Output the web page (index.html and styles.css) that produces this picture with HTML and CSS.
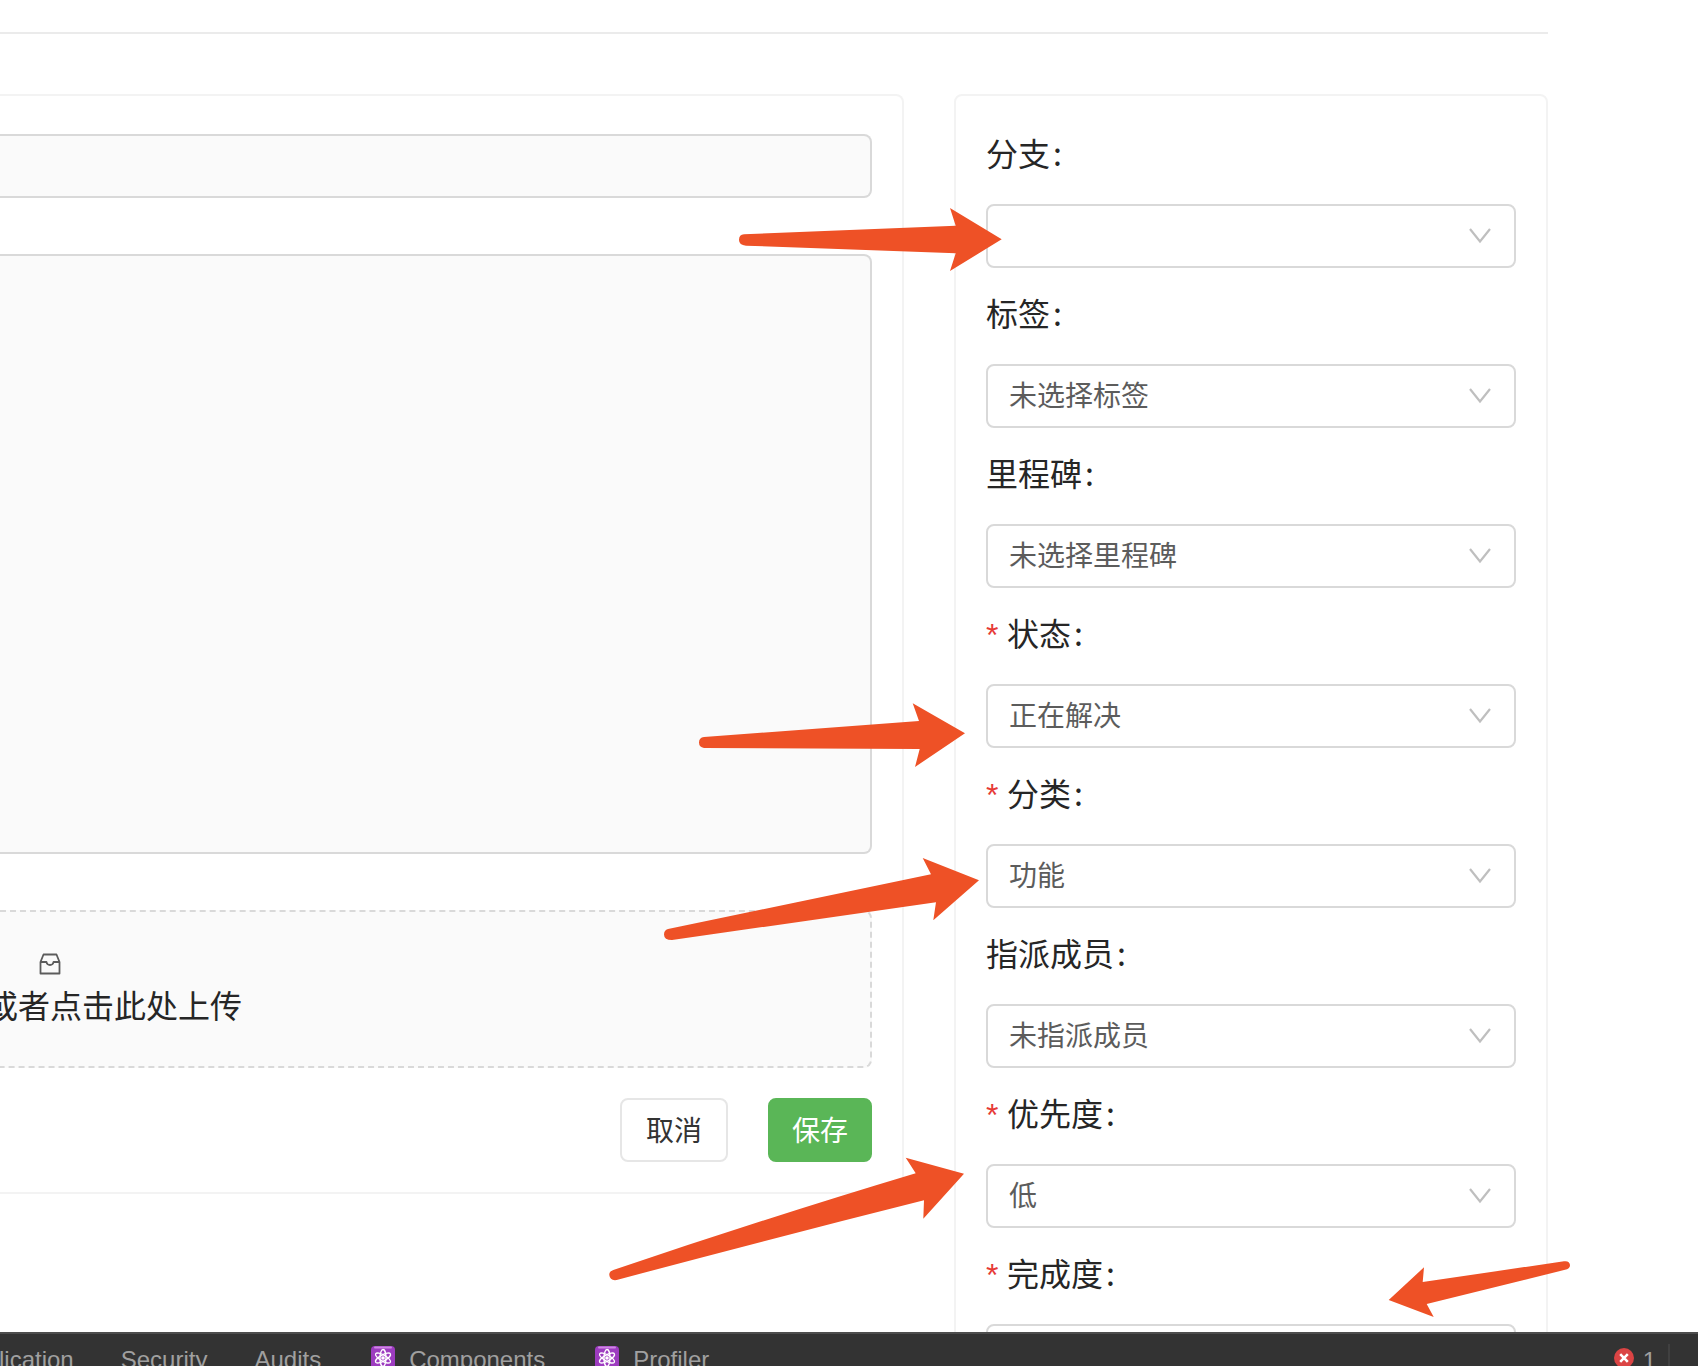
FILE: index.html
```html
<!DOCTYPE html>
<html lang="zh-CN">
<head>
<meta charset="utf-8">
<link rel="stylesheet" href="styles.css">
</head>
<body>
<svg class="defs" width="0" height="0" aria-hidden="true">
  <symbol id="chevron" viewBox="0 0 22 16"><path d="M1 1 L11 13.500 L21 1" fill="none" stroke="#bfbfbf" stroke-width="2.200"/></symbol>
  <symbol id="atom" viewBox="0 0 24 24">
    <rect width="24" height="24" rx="4" fill="#9d3cc0"/>
    <path d="M4 1.500H20" stroke="#cf86e4" stroke-width="2" stroke-linecap="round"/>
    <g fill="none" stroke="#fff" stroke-width="1.300">
      <ellipse cx="12" cy="12" rx="3" ry="8.500"/>
      <ellipse cx="12" cy="12" rx="3" ry="8.500" transform="rotate(60 12 12)"/>
      <ellipse cx="12" cy="12" rx="3" ry="8.500" transform="rotate(120 12 12)"/>
    </g>
    <circle cx="12" cy="12" r="1.800" fill="#fff"/>
  </symbol>
</svg>
<main class="page">
  <hr class="divider">
  <form class="columns">
    <section class="card editor">
      <input class="field title" type="text" aria-label="标题">
      <textarea class="field body-text" aria-label="描述"></textarea>
      <div class="dropzone">
        <div class="drop-icon">
          <svg width="22" height="22" viewBox="0 0 22 22" fill="none" stroke="#5c5c5c" stroke-width="1.800"><path d="M1.500 9 L4.500 1.500 H17.500 L20.500 9 V20.500 H1.500 Z M1.500 9 H7.500 C8 13 14 13 14.500 9 H20.500" stroke-linejoin="round"/></svg>
        </div>
        <p class="drop-text">或者点击此处上传</p>
      </div>
      <div class="actions">
        <button class="btn" type="button">取消</button>
        <button class="btn primary" type="button">保存</button>
      </div>
    </section>
    <aside class="card side">
      <div class="item"><label for="branch">分支<span class="colon">:</span></label><div class="select"><select id="branch"><option></option></select><svg><use href="#chevron"/></svg></div></div>
      <div class="item"><label for="tag">标签<span class="colon">:</span></label><div class="select"><select id="tag"><option>未选择标签</option></select><svg><use href="#chevron"/></svg></div></div>
      <div class="item"><label for="milestone">里程碑<span class="colon">:</span></label><div class="select"><select id="milestone"><option>未选择里程碑</option></select><svg><use href="#chevron"/></svg></div></div>
      <div class="item"><label for="status"><span class="star">*</span>状态<span class="colon">:</span></label><div class="select"><select id="status"><option>正在解决</option></select><svg><use href="#chevron"/></svg></div></div>
      <div class="item"><label for="category"><span class="star">*</span>分类<span class="colon">:</span></label><div class="select"><select id="category"><option>功能</option></select><svg><use href="#chevron"/></svg></div></div>
      <div class="item"><label for="member">指派成员<span class="colon">:</span></label><div class="select"><select id="member"><option>未指派成员</option></select><svg><use href="#chevron"/></svg></div></div>
      <div class="item"><label for="priority"><span class="star">*</span>优先度<span class="colon">:</span></label><div class="select"><select id="priority"><option>低</option></select><svg><use href="#chevron"/></svg></div></div>
      <div class="item"><label for="progress"><span class="star">*</span>完成度<span class="colon">:</span></label><div class="select"><select id="progress"><option></option></select><svg><use href="#chevron"/></svg></div></div>
    </aside>
  </form>
</main>
<footer class="devtools">
  <nav class="tabs">
    <a class="tab" href="#">lication</a>
    <a class="tab" href="#">Security</a>
    <a class="tab" href="#">Audits</a>
    <a class="tab" href="#"><svg width="24" height="24"><use href="#atom"/></svg>Components</a>
    <a class="tab" href="#"><svg width="24" height="24"><use href="#atom"/></svg>Profiler</a>
  </nav>
  <div class="errors">
    <svg width="20" height="20" viewBox="0 0 20 20"><circle cx="10" cy="10" r="10" fill="#db4444"/><path d="M6.200 6.200 L13.800 13.800 M13.800 6.200 L6.200 13.800" stroke="#fff" stroke-width="2.600"/></svg>
    <span>1</span>
  </div>
</footer>
<svg class="arrows" width="1698" height="1366" viewBox="0 0 1698 1366" fill="#ee5126" aria-hidden="true">
  <path d="M744 234.300 L955.700 225.700 L950 208 L1001.700 239.300 L950 271 L955.700 253.300 L746 245.700 Q739 245 739 240 Q739 234.500 744 234.300Z"/>
  <path d="M704 737 L919 721 L912.700 703.300 L965 733.300 L915 767 L919.700 749 L704 748 Q699 747 699 742.500 Q699 737.500 704 737Z"/>
  <path d="M668 929 L931 874.300 L922.700 858 L979 880.300 L933.300 920.300 L936 902.300 L672 940 Q664 940 664 934.500 Q664 930 668 929Z"/>
  <path d="M613.300 1270 Q770 1217 915.700 1173.300 L905.700 1157.700 L964 1173.700 L923.300 1218.700 L924 1200.300 Q770 1239 616.700 1280 Q610 1281 609.300 1275 Q609 1271.500 613.300 1270Z"/>
  <path d="M1564 1261.300 L1422.700 1282 L1424 1267.300 L1388.700 1300 L1433.700 1317 L1426.700 1304 L1567 1269.300 Q1570 1268 1570 1265 Q1569.500 1260.500 1564 1261.300Z"/>
</svg>
</body>
</html>
```
FILE: styles.css
```css
* { box-sizing: border-box; }

body {
  margin: 0;
  height: 100vh;
  display: flex;
  flex-direction: column;
  overflow: hidden;
  position: relative;
  background: #fff;
  color: #262626;
  font-family: "Liberation Sans", "Noto Sans CJK SC", sans-serif;
  font-size: 32px;
}

.defs { position: absolute; }

.page {
  flex: 1;
  min-height: 0;
  overflow: hidden;
  padding: 32px 150px 0 0;
}

.divider {
  margin: 0 0 60px;
  border: 0;
  border-top: 2px solid #ebebeb;
}

.columns {
  display: grid;
  grid-template-columns: minmax(0, 1fr) 594px;
  gap: 50px;
  align-items: start;
}

.card {
  border: 2px solid #f3f3f3;
  border-radius: 8px;
}

.editor {
  display: flex;
  flex-direction: column;
  padding: 38px 30px 30px 0;
  border-left: 0;
  border-top-left-radius: 0;
  border-bottom-left-radius: 0;
}

.field {
  width: 100%;
  margin: 0;
  padding: 0 22px;
  border: 2px solid #d9d9d9;
  border-left: 0;
  border-radius: 0 8px 8px 0;
  background: #fafafa;
  font: inherit;
  resize: none;
}

.title { height: 64px; }

.body-text {
  height: 600px;
  margin-top: 56px;
}

.dropzone {
  height: 158px;
  margin-top: 56px;
  padding-top: 41px;
  overflow: hidden;
  border: 2px dashed #d9d9d9;
  border-left: 0;
  border-radius: 0 8px 8px 0;
  background: #fafafa;
}

.drop-icon {
  display: flex;
  justify-content: center;
  width: 100px;
}

.drop-text {
  margin: 8px 0 0 -14px;
  line-height: 48px;
  white-space: nowrap;
}

.actions {
  display: flex;
  justify-content: flex-end;
  gap: 40px;
  margin-top: 30px;
}

.btn {
  height: 64px;
  padding: 0 24px 2px;
  border: 2px solid #e6e6e6;
  border-radius: 8px;
  background: #fff;
  color: #333;
  font: inherit;
  font-size: 28px;
}

.primary {
  padding: 0 22px 2px;
  border-color: #5ab657;
  background: #5ab657;
  color: #fff;
}

.side { padding: 18px 30px 0; }

.item { margin-bottom: 6px; }

.item label {
  display: flex;
  height: 80px;
  margin-bottom: 10px;
  line-height: 82px;
}

.colon {
  margin-left: 3px;
  font-family: "Noto Sans CJK SC", sans-serif;
  line-height: 76px;
}

.star {
  width: 21px;
  color: #e63a36;
}

.select {
  position: relative;
  height: 64px;
}

.select select {
  width: 100%;
  height: 64px;
  padding: 0 64px 0 21px;
  border: 2px solid #d9d9d9;
  border-radius: 8px;
  background: #fff;
  color: #5c5c5c;
  font: inherit;
  font-size: 28px;
  appearance: none;
}

.select svg {
  position: absolute;
  top: 24px;
  right: 25px;
  width: 22px;
  height: 16px;
  pointer-events: none;
}

.devtools {
  flex: none;
  display: flex;
  justify-content: space-between;
  height: 34px;
  overflow: hidden;
  border-top: 2px solid #4d4d4d;
  background: #333;
  color: #a0a0a0;
  font-size: 24px;
  line-height: 28px;
}

.tabs {
  display: flex;
  gap: 47px;
  margin-left: -1px;
  padding-top: 12px;
}

.tab {
  display: flex;
  gap: 14px;
  color: inherit;
  text-decoration: none;
}

.tab svg { margin-left: 3px; }

.errors {
  display: flex;
  gap: 9px;
  height: 40px;
  margin: 10px 28px 0 0;
  padding: 4px 12px 0 0;
  border-right: 2px solid #404040;
}

.errors span { line-height: 26px; }

.arrows {
  position: absolute;
  top: 0;
  left: 0;
  pointer-events: none;
}
```
